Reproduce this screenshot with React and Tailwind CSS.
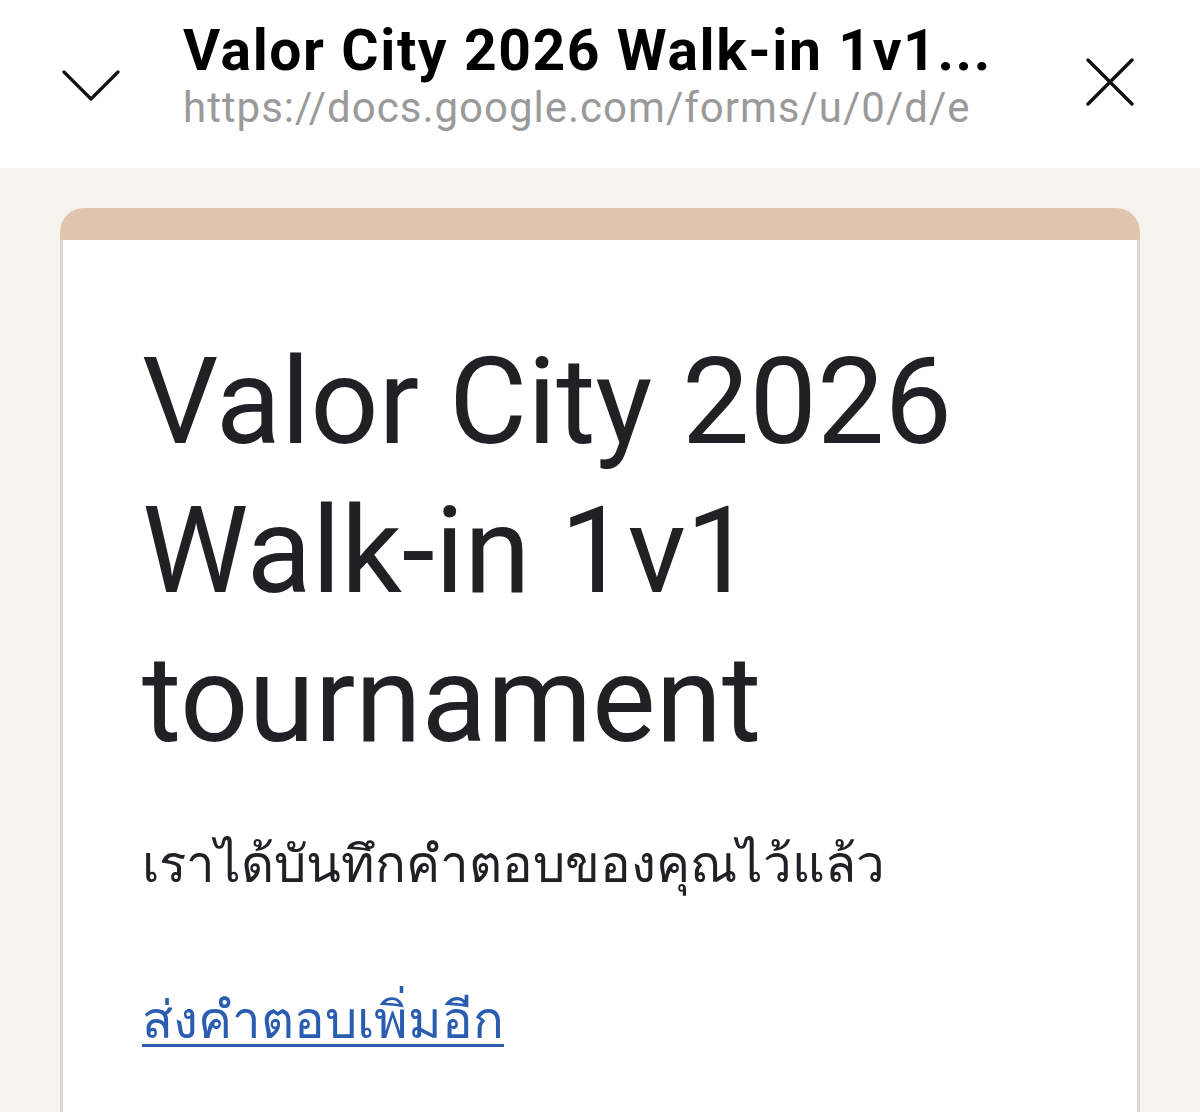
export default function App() {
  return (
    <div className="w-[1200px] h-[1112px] overflow-hidden bg-[#f6f2ee]" style={{ fontFamily: 'Roboto, "Noto Sans", sans-serif' }}>
      <header className="h-[168px] bg-white flex items-start">
        <div className="w-[183px] shrink-0 flex justify-start pl-[62px] pt-[70px]">
          <svg width="58" height="32" viewBox="0 0 58 32" fill="none" stroke="#111" strokeWidth="3.2" strokeLinecap="round" strokeLinejoin="round">
            <path d="M2 2 L29 29 L56 2" />
          </svg>
        </div>
        <div className="flex-1 min-w-0 pt-[18px]">
          <div className="text-[57px] leading-[66px] font-bold text-black tracking-[1.6px] whitespace-nowrap">Valor City 2026 Walk-in 1v1...</div>
          <div className="text-[42px] leading-[48px] text-[#9a9a9a] tracking-[1px] whitespace-nowrap">https://docs.google.com/forms/u/0/d/e</div>
        </div>
        <div className="w-[120px] shrink-0 pt-[58px] pl-[6px]">
          <svg width="48" height="48" viewBox="0 0 48 48" fill="none" stroke="#111" strokeWidth="3.4" strokeLinecap="round">
            <path d="M2 2 L46 46 M46 2 L2 46" />
          </svg>
        </div>
      </header>
      <main className="px-[60px] pt-[40px]">
        <div className="rounded-t-[24px] overflow-hidden">
          <div className="h-[32px] bg-[#dfc5ad]" />
          <div className="bg-white border-x-[3px] border-[#dadada] pl-[79px] pr-[40px] pt-[88px] h-[900px]">
            <h1 className="text-[120px] leading-[149px] text-[#202124] font-normal">
              Valor City 2026 Walk-in 1v1 tournament
            </h1>
            <p className="mt-[57px] text-[51px] leading-[60px] text-[#202124]" style={{ fontFamily: '"Noto Sans", Roboto, sans-serif' }}>
              เราได้บันทึกคำตอบของคุณไว้แล้ว
            </p>
            <a href="#" className="inline-block mt-[96px] text-[51px] leading-[60px] text-[#2a5db0] underline decoration-[3px] underline-offset-[6px]" style={{ fontFamily: '"Noto Sans", Roboto, sans-serif' }}>
              ส่งคำตอบเพิ่มอีก
            </a>
          </div>
        </div>
      </main>
    </div>
  );
}
